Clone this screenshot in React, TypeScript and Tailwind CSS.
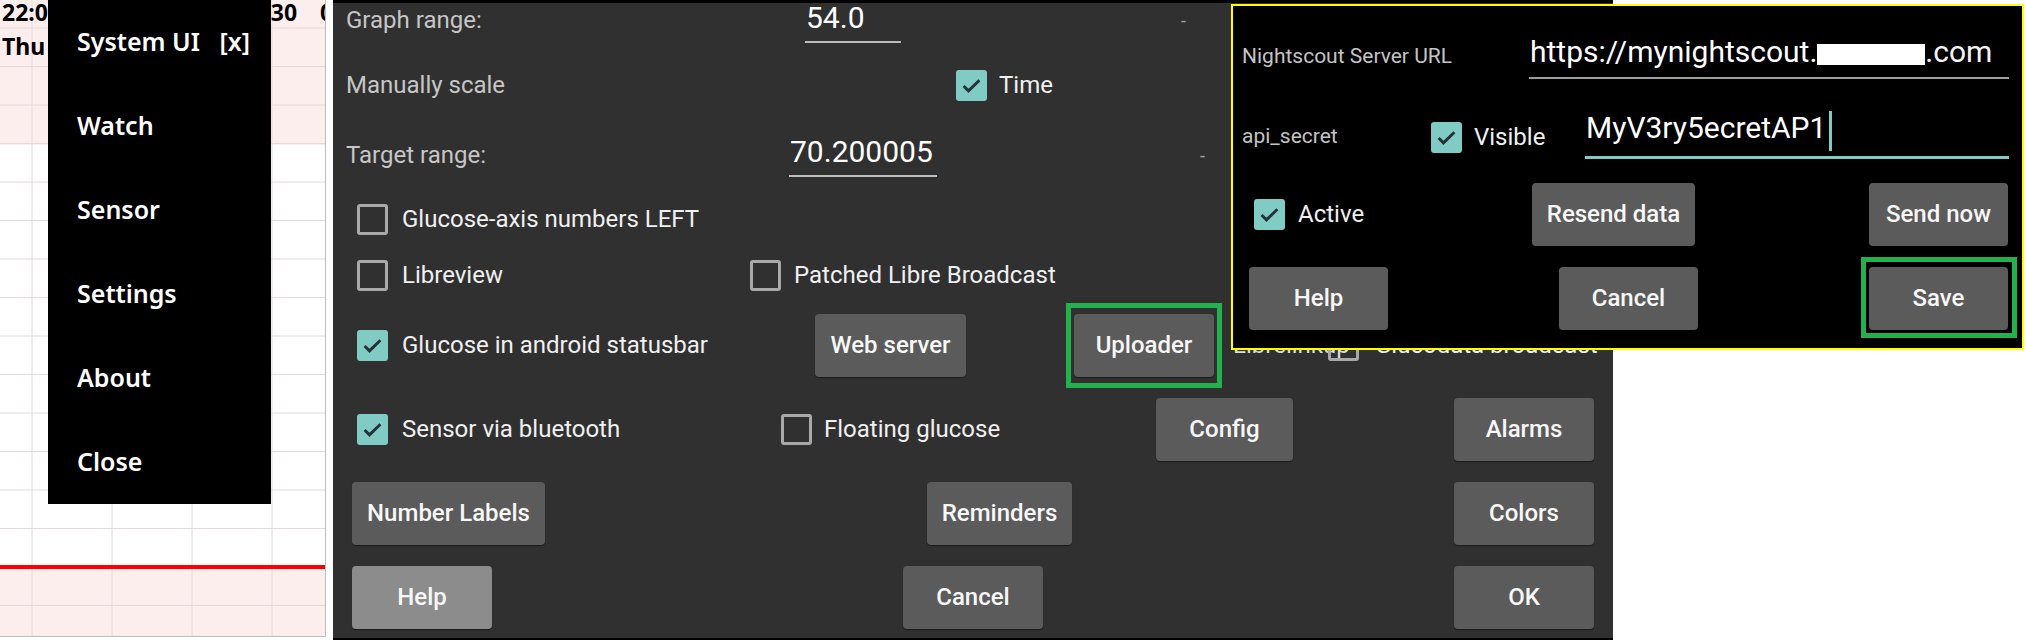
import React from 'react';

const hLines = [28, 66.5, 105, 143.5, 182, 220.5, 259, 297.5, 336, 374.5, 413, 451.5, 490, 528.5, 605.5];
const vLines = [32, 112, 192, 272];
const menuItems = ['System UI   [x]', 'Watch', 'Sensor', 'Settings', 'About', 'Close'];

const Check = ({ on }: { on?: boolean }) =>
  on ? (
    <span className="flex h-[31px] w-[31px] shrink-0 items-center justify-center rounded-[3px] bg-[#80cbc4]">
      <svg viewBox="0 0 24 24" className="h-[27px] w-[27px]">
        <path d="M5 12.5l4.3 4.3L19 7.3" fill="none" stroke="#263238" strokeWidth="2.6" />
      </svg>
    </span>
  ) : (
    <span className="h-[31px] w-[31px] shrink-0 rounded-[3px] border-[3px] border-[#a9a9a9]" />
  );

const Btn = ({ label, className = '', light }: { label: string; className?: string; light?: boolean }) => (
  <div
    className={`flex h-[63px] shrink-0 items-center justify-center rounded-[4px] text-[24px] font-medium text-[#f7f7f7] shadow-[0_1px_1px_rgba(0,0,0,0.45)] ${
      light ? 'bg-[#8c8c8c]' : 'bg-[#5b5b5b]'
    } ${className}`}
  >
    {label}
  </div>
);

const LeftPanel = () => (
  <div className="relative h-[637px] w-[326px] shrink-0 overflow-hidden border-r border-b border-[#bdbdbd] bg-white font-['Noto_Sans',sans-serif]">
    <svg className="absolute inset-0" width="325" height="637">
      <rect x="0" y="0" width="325" height="145" fill="#fdeeee" />
      <rect x="0" y="567" width="325" height="70" fill="#fdeeee" />
      {hLines.map((y) => (
        <line key={y} x1="0" x2="325" y1={y} y2={y} stroke="#e2dada" strokeWidth="1" />
      ))}
      {vLines.map((x) => (
        <line key={x} x1={x} x2={x} y1="0" y2="637" stroke="#e2dada" strokeWidth="1" />
      ))}
      <rect x="0" y="565" width="325" height="4" fill="#ff0000" />
    </svg>
    {/* axis labels of the chart, partly covered by the menu */}
    <span className="absolute left-[2px] top-0 text-[23px] font-bold leading-[24px] text-black">22:00</span>
    <span className="absolute left-[2px] top-[34px] text-[23px] font-bold leading-[24px] text-black">Thu 12</span>
    <span className="absolute left-[238px] top-0 text-[23px] font-bold leading-[24px] text-black">22:30</span>
    <span className="absolute left-[320px] top-0 text-[23px] font-bold leading-[24px] text-black">0</span>
    <div className="absolute left-[48px] top-0 flex h-[504px] w-[223px] flex-col bg-black">
      {menuItems.map((m) => (
        <div key={m} className="flex h-[84px] items-center whitespace-pre pl-[29px] text-[25px] font-semibold text-white">
          {m}
        </div>
      ))}
    </div>
  </div>
);

const MiddlePanel = () => (
  <div className="flex h-[640px] w-[1280px] shrink-0 flex-col overflow-hidden border-t-[3px] border-b-[2px] border-black bg-[#303030] font-[Roboto,'Liberation_Sans',sans-serif] text-[24px] text-[#f0f0f0]">
    {/* Graph range */}
    <div className="flex h-[34px] shrink-0 items-center pl-[13px]">
      <span className="w-[459px] shrink-0 text-[#c6c6c6]">Graph range:</span>
      <div className="mt-[6px] h-[40px] w-[96px] shrink-0 border-b-2 border-[#bdbdbd] pl-[1px] text-[30px] leading-[30px] text-white">54.0</div>
      <span className="ml-[280px] text-[18px] text-[#a0a0a0]">-</span>
    </div>
    {/* Manually scale */}
    <div className="flex h-[96px] shrink-0 items-center pl-[13px]">
      <span className="w-[610px] shrink-0 text-[#c6c6c6]">Manually scale</span>
      <Check on />
      <span className="ml-[12px]">Time</span>
    </div>
    {/* Target range */}
    <div className="flex h-[44px] shrink-0 items-center pl-[13px]">
      <span className="w-[443px] shrink-0 text-[#c6c6c6]">Target range:</span>
      <div className="mt-[4px] h-[40px] w-[148px] shrink-0 border-b-2 border-[#bdbdbd] pl-[1px] text-[30px] leading-[30px] text-white">70.200005</div>
      <span className="ml-[263px] text-[18px] text-[#a0a0a0]">-</span>
    </div>
    <div className="flex h-[84px] shrink-0 items-center pl-[24px]">
      <Check />
      <span className="ml-[14px]">Glucose-axis numbers LEFT</span>
    </div>
    <div className="flex h-[28px] shrink-0 items-center pl-[24px]">
      <div className="flex w-[393px] shrink-0 items-center">
        <Check />
        <span className="ml-[14px]">Libreview</span>
      </div>
      <Check />
      <span className="ml-[13px]">Patched Libre Broadcast</span>
    </div>
    <div className="flex h-[112px] shrink-0 items-center pl-[24px]">
      <div className="flex w-[458px] shrink-0 items-center">
        <Check on />
        <span className="ml-[14px]">Glucose in android statusbar</span>
      </div>
      <Btn label="Web server" className="w-[151px]" />
      <div className="relative ml-[108px] shrink-0">
        <Btn label="Uploader" className="w-[140px]" />
        <div className="absolute -bottom-[11px] -left-[8px] -right-[8px] -top-[11px] border-[5px] border-[#22b14c]" />
      </div>
      <span className="ml-[19px] w-[95px] shrink-0 text-[#dcdcdc]">Librelinkup</span>
      <Check />
      <span className="ml-[16px]">Glucodata broadcast</span>
    </div>
    <div className="flex h-[56px] shrink-0 items-center pl-[24px]">
      <div className="flex w-[424px] shrink-0 items-center">
        <Check on />
        <span className="ml-[14px]">Sensor via bluetooth</span>
      </div>
      <div className="flex w-[375px] shrink-0 items-center">
        <Check />
        <span className="ml-[12px]">Floating glucose</span>
      </div>
      <Btn label="Config" className="w-[137px]" />
      <Btn label="Alarms" className="ml-[161px] w-[140px]" />
    </div>
    <div className="flex h-[112px] shrink-0 items-center pl-[19px]">
      <Btn label="Number Labels" className="w-[193px]" />
      <Btn label="Reminders" className="ml-[382px] w-[145px]" />
      <Btn label="Colors" className="ml-[382px] w-[140px]" />
    </div>
    <div className="flex h-[56px] shrink-0 items-center pl-[19px]">
      <Btn label="Help" light className="w-[140px]" />
      <Btn label="Cancel" className="ml-[411px] w-[140px]" />
      <Btn label="OK" className="ml-[411px] w-[140px]" />
    </div>
  </div>
);

const UploaderDialog = () => (
  <div className="absolute left-[1231px] top-[4px] flex h-[346px] w-[793px] flex-col border-2 border-[#ffff00] bg-black font-[Roboto,'Liberation_Sans',sans-serif] text-[24px] text-[#f0f0f0]">
    <div className="flex h-[102px] shrink-0 items-center pl-[9px]">
      <span className="w-[287px] shrink-0 text-[21px] text-[#c4c4c4]">Nightscout Server URL</span>
      <div className="mb-[4px] flex h-[48px] w-[480px] shrink-0 items-start whitespace-nowrap border-b-2 border-[#9e9e9e] pl-[1px] pt-[4px] text-[30px] leading-[34px] text-white">
        https://mynightscout.
        <span className="mt-[9px] inline-block h-[21px] w-[108px] shrink-0 bg-white" />
        <span className="text-[#f4f4f4]">.com</span>
      </div>
    </div>
    <div className="flex h-[58px] shrink-0 items-center pl-[9px]">
      <span className="w-[189px] shrink-0 text-[21px] text-[#c4c4c4]">api_secret</span>
      <div className="flex w-[154px] shrink-0 items-center">
        <Check on />
        <span className="ml-[12px]">Visible</span>
      </div>
      <div className="mb-[4px] flex h-[48px] w-[424px] shrink-0 items-start border-b-[3px] border-[#80cbc4] pl-[1px] text-[30px] leading-[34px] text-white">
        MyV3ry5ecretAP1
        <span className="ml-[3px] h-[40px] w-[3px] bg-[#80cbc4]" />
      </div>
    </div>
    <div className="flex h-[96px] shrink-0 items-center pl-[21px]">
      <div className="flex w-[278px] shrink-0 items-center">
        <Check on />
        <span className="ml-[13px]">Active</span>
      </div>
      <Btn label="Resend data" className="w-[163px]" />
      <Btn label="Send now" className="ml-[174px] w-[139px]" />
    </div>
    <div className="flex h-[72px] shrink-0 items-center pl-[16px]">
      <Btn label="Help" className="w-[139px]" />
      <Btn label="Cancel" className="ml-[171px] w-[139px]" />
      <div className="relative ml-[171px] shrink-0">
        <Btn label="Save" className="w-[139px]" />
        <div className="absolute -bottom-[8px] -left-[8px] -right-[9px] -top-[10px] border-[5px] border-[#22b14c]" />
      </div>
    </div>
  </div>
);

export default function App() {
  return (
    <div className="relative flex h-[640px] w-[2026px] overflow-hidden bg-white">
      <LeftPanel />
      <div className="w-[7px] shrink-0" />
      <MiddlePanel />
      <UploaderDialog />
    </div>
  );
}
